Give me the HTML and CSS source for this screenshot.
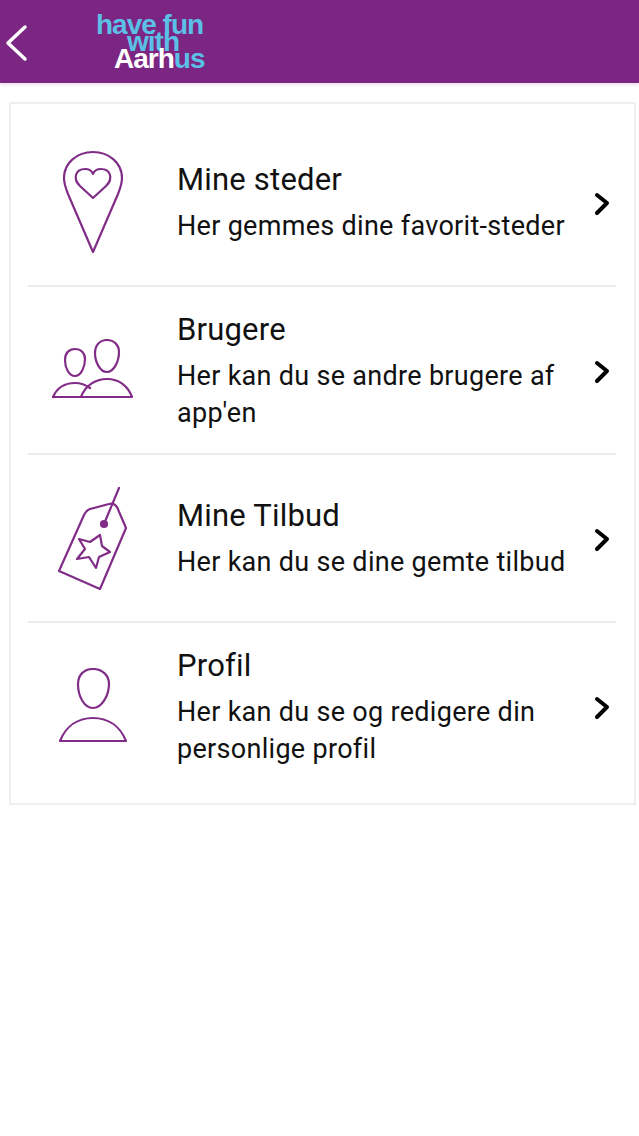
FILE: index.html
```html
<!DOCTYPE html>
<html lang="en">
<head>
    <meta charset="UTF-8">
    <meta name="viewport" content="width=device-width, initial-scale=1.0">
    <title>Have fun with Aarhus</title>
    <link rel="stylesheet" href="styles.css">
</head>
<body>

<header class="topbar">
    <svg class="back" width="24" height="40" viewBox="0 0 24 40"><path d="M21 4 L4 20 L21 36" /></svg>
    <div class="logo">
        <div class="logo-line logo-have">have fun</div>
        <div class="logo-line logo-with">with</div>
        <div class="logo-line logo-aarhus">Aarh<span>us</span></div>
    </div>
</header>

<div class="card">
    <div class="row row-first">
        <div class="row-icon">
            <svg width="60" height="104" viewBox="0 0 60 104"><path d="M30 2 C14 2 1 13 1 28 C1 34 3 39 5 44 L30 102 L55 44 C57 39 59 34 59 28 C59 13 46 2 30 2 Z" /><path d="M30 48 L17 36 C9 28 13 19 22 19 C26 19 29 21 30 24 C31 21 34 19 38 19 C47 19 51 28 43 36 Z" /></svg>
        </div>
        <div class="row-text">
            <h2>Mine steder</h2>
            <p>Her gemmes dine favorit-steder</p>
        </div>
        <svg class="chevron" width="16" height="24" viewBox="0 0 16 24"><path d="M3 3 L13 11 L3 21" /></svg>
    </div>

    <div class="row">
        <div class="row-icon">
            <svg width="82" height="62" viewBox="0 0 82 62"><path d="M23 10 C17 10 13 14 13 21 C13 29 17 37 23 37 C29 37 33 28 33 20 C33 14 29 10 23 10 Z" /><path d="M55 1 C48 1 43 6 43 14 C43 23 48 33 55 33 C62 33 67 22 67 13 C67 6 62 1 55 1 Z" /><path d="M1 58 C5 49 13 44 23 44 C29 44 34 46 38 49" /><path d="M29 58 C33 47 43 40 55 40 C67 40 76 47 80 58 Z" /><path d="M1 58 L29 58" /></svg>
        </div>
        <div class="row-text">
            <h2>Brugere</h2>
            <p>Her kan du se andre brugere af app'en</p>
        </div>
        <svg class="chevron" width="16" height="24" viewBox="0 0 16 24"><path d="M3 3 L13 11 L3 21" /></svg>
    </div>

    <div class="row">
        <div class="row-icon">
            <svg width="72" height="104" viewBox="0 0 72 104"><path d="M2 85 L43 103 L69 42 L60 21 C58 18 55 17 52 18 L33 23 C30 24 28 27 27 29 Z" /><path d="M47 38 L62 2" /><circle class="filled" cx="47" cy="38" r="3" /><path d="M43 49 L45 60 L53 66 L42 71 L39 82 L32 71 L20 73 L28 63 L22 53 L33 56 Z" /></svg>
        </div>
        <div class="row-text">
            <h2>Mine Tilbud</h2>
            <p>Her kan du se dine gemte tilbud</p>
        </div>
        <svg class="chevron" width="16" height="24" viewBox="0 0 16 24"><path d="M3 3 L13 11 L3 21" /></svg>
    </div>

    <div class="row row-last">
        <div class="row-icon">
            <svg width="68" height="76" viewBox="0 0 68 76"><path d="M34 1 C25 1 19 7 19 16 C19 28 25 40 34 40 C43 40 50 27 50 16 C50 7 43 1 34 1 Z" /><path d="M1 73 C7 58 19 50 34 50 C49 50 61 58 67 73 Z" /></svg>
        </div>
        <div class="row-text">
            <h2>Profil</h2>
            <p>Her kan du se og redigere din personlige profil</p>
        </div>
        <svg class="chevron" width="16" height="24" viewBox="0 0 16 24"><path d="M3 3 L13 11 L3 21" /></svg>
    </div>
</div>

</body>
</html>
```
FILE: styles.css
```css
body {
    margin: 0;
    background-color: #fff;
    color: #111;
    font-family: Roboto, sans-serif;
}

.topbar {
    display: flex;
    align-items: center;
    height: 83px;
    background-color: #7b2682;
    box-shadow: 0 2px 3px rgba(123, 38, 130, 0.15);
}

.back {
    margin: 2px 0 0 4px;
}

.back path {
    fill: none;
    stroke: #fff;
    stroke-width: 3.5;
    stroke-linecap: round;
    stroke-linejoin: round;
}

.logo {
    margin-left: 68px;
    width: 112px;
    font-family: "Liberation Sans", sans-serif;
    font-weight: 700;
    font-size: 28px;
    letter-spacing: -1px;
    color: #5cc0e6;
}

.logo-line {
    height: 17px;
    line-height: 17px;
    white-space: nowrap;
}

.logo-with {
    padding-left: 31px;
}

.logo-aarhus {
    padding-left: 18px;
    color: #fff;
}

.logo-aarhus span {
    color: #5cc0e6;
}

.card {
    margin: 19px 3px 0 9px;
    border: 2px solid #efefef;
}

.row {
    display: flex;
    align-items: center;
    min-height: 166px;
    margin: 0 18px 0 17px;
    border-bottom: 2px solid #ebebeb;
}

.row-first {
    padding-top: 15px;
}

.row-last {
    padding-bottom: 14px;
    border-bottom: 0;
}

.row-icon {
    flex: 0 0 130px;
    display: flex;
    justify-content: center;
}

.row-icon svg {
    fill: none;
    stroke: #812d88;
    stroke-width: 2.2;
    stroke-linejoin: round;
    stroke-linecap: round;
}

.row-icon .filled {
    fill: #812d88;
}

.row-text {
    flex: 1;
    padding: 2px 0 0 19px;
}

.row-text h2 {
    margin: 0 0 9px;
    font-size: 31px;
    line-height: 38px;
    font-weight: 400;
    letter-spacing: 0.2px;
}

.row-text p {
    margin: 0;
    max-width: 395px;
    font-size: 27px;
    line-height: 37px;
    letter-spacing: 0.3px;
}

.chevron {
    flex: 0 0 auto;
    margin: 3px 6px 0 0;
}

.chevron path {
    fill: none;
    stroke: #000;
    stroke-width: 4;
    stroke-linecap: round;
    stroke-linejoin: round;
}
```
